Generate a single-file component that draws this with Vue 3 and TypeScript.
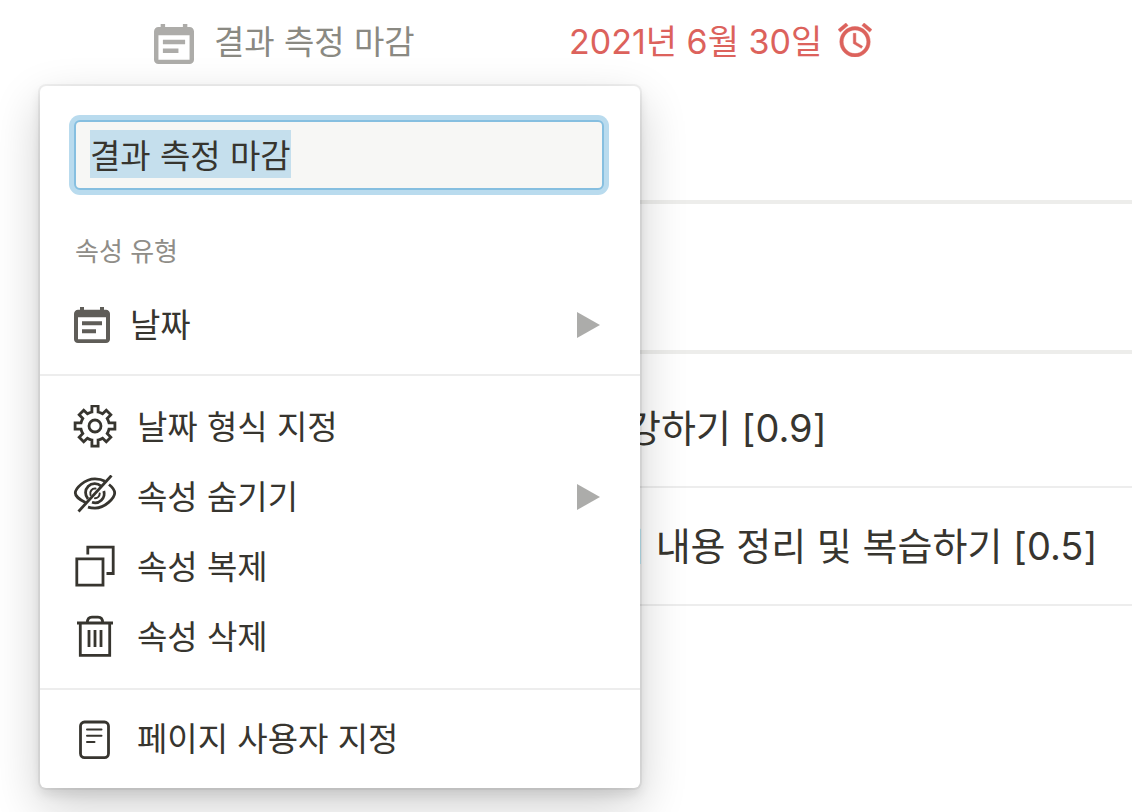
<script setup lang="ts">
import { onMounted, ref } from 'vue'

type IconName = 'gear' | 'hide' | 'duplicate' | 'trash'

interface Action {
  icon: IconName
  label: string
  submenu: boolean
}

const propertyName = ref('결과 측정 마감')
const nameInput = ref<HTMLInputElement | null>(null)

const actions: Action[] = [
  { icon: 'gear', label: '날짜 형식 지정', submenu: false },
  { icon: 'hide', label: '속성 숨기기', submenu: true },
  { icon: 'duplicate', label: '속성 복제', submenu: false },
  { icon: 'trash', label: '속성 삭제', submenu: false },
]

const calendarPath =
  'M10.8889,5.5 L3.11111,5.5 L3.11111,7.05556 L10.8889,7.05556 L10.8889,5.5 Z M12.4444,1.05556 L11.6667,1.05556 L11.6667,0 L10.1111,0 L10.1111,1.05556 L3.88889,1.05556 L3.88889,0 L2.33333,0 L2.33333,1.05556 L1.55556,1.05556 C0.692222,1.05556 0.00777777,1.75556 0.00777777,2.61111 L0,12.5 C0,13.3556 0.692222,14 1.55556,14 L12.4444,14 C13.3,14 14,13.3556 14,12.5 L14,2.61111 C14,1.75556 13.3,1.05556 12.4444,1.05556 Z M12.4444,12.5 L1.55556,12.5 L1.55556,3.94444 L12.4444,3.94444 L12.4444,12.5 Z M8.55556,8.61111 L3.11111,8.61111 L3.11111,10.1667 L8.55556,10.1667 L8.55556,8.61111 Z'

onMounted(() => {
  nameInput.value?.focus()
  nameInput.value?.select()
})
</script>

<template>
  <main class="page">
    <section class="property">
      <button class="property-name" type="button">
        <svg class="icon-calendar-lg" viewBox="0 0 14 14" aria-hidden="true"><path :d="calendarPath" /></svg>
        <span>결과 측정 마감</span>
      </button>
      <button class="property-date" type="button">
        <span>2021년 6월 30일</span>
        <svg class="icon-alarm" viewBox="2 1.86 20 20.14" aria-hidden="true">
          <path d="M22 5.72l-4.6-3.86-1.29 1.53 4.6 3.86L22 5.72zM7.88 3.39L6.6 1.86 2 5.71l1.29 1.53 4.59-3.85zM12.5 8H11v6l4.75 2.85.75-1.23-4-2.37V8zM12 4c-4.97 0-9 4.03-9 9s4.02 9 9 9c4.97 0 9-4.03 9-9s-4.03-9-9-9zm0 16c-3.87 0-7-3.13-7-7s3.13-7 7-7 7 3.13 7 7-3.13 7-7 7z" />
        </svg>
      </button>
    </section>

    <div class="table">
      <div class="band"></div>
      <div class="entry first">강하기 [0.9]</div>
      <div class="entry second">의 내용 정리 및 복습하기 [0.5]</div>
    </div>

    <div class="menu">
      <section class="group type-group">
        <input ref="nameInput" v-model="propertyName" class="name-input" type="text" aria-label="속성 이름" />
        <h2 class="caption">속성 유형</h2>
        <button class="item type-item" type="button">
          <svg class="icon-calendar" viewBox="0 0 14 14" aria-hidden="true"><path :d="calendarPath" /></svg>
          <span class="label">날짜</span>
          <svg class="arrow" viewBox="0 0 23 26" aria-hidden="true"><path d="M0 0L23 13L0 26Z" /></svg>
        </button>
      </section>

      <section class="group action-group">
        <button v-for="action in actions" :key="action.label" class="item" type="button">
          <svg class="icon" viewBox="0 0 44 44" aria-hidden="true">
            <g v-if="action.icon === 'gear'" transform="translate(22 21)">
              <path d="M-3.1-14V-20.2H3.1V-14Q5.5-13.5 7.6-12.2L11.3-15.8L15.8-11.3L12.2-7.6Q13.5-5.5 14-3.1H19.9V3.1H14Q13.5 5.5 12.2 7.6L15.8 11.3L11.3 15.8L7.6 12.2Q5.5 13.5 3.1 14V20.2H-3.1V14Q-5.5 13.5-7.6 12.2L-11.3 15.8L-15.8 11.3L-12.2 7.6Q-13.5 5.5-14 3.1H-19.9V-3.1H-14Q-13.5-5.5-12.2-7.6L-15.8-11.3L-11.3-15.8L-7.6-12.2Q-5.5-13.5-3.1-14Z" />
              <circle r="6" />
            </g>
            <g v-else-if="action.icon === 'hide'" transform="translate(0 -2)">
              <path d="M5.5 38.5L38.5 2.5" />
              <path d="M12.5 29.5C6 26.5 2.3 22.5 2.3 20C2.3 15.5 11.5 5.8 22 5.8Q28 5.8 32 8.2" />
              <path d="M36 11.5C39.8 14.5 41.7 18 41.7 20C41.7 24.8 32 35.2 22 35.2Q18 35.2 15 34.2" />
              <path d="M15 26A9.2 9.2 0 0 1 28 13" />
              <path d="M30.8 18A9.2 9.2 0 0 1 19 29.3" />
              <path class="fine" d="M17.5 22A4.8 4.8 0 0 1 22.5 15.6" />
              <path class="fine" d="M26.7 20.5A4.8 4.8 0 0 1 22 25.2" />
            </g>
            <g v-else-if="action.icon === 'duplicate'">
              <path d="M3.8 13.8H30V40.2H3.8Z" />
              <path d="M14.8 9.5V2.2H40.2V28.5H33.5" />
            </g>
            <g v-else>
              <path d="M4 8H40" />
              <path d="M14.3 8C14.3 4 16.3 2.2 19 2.2H25C27.7 2.2 29.7 4 29.7 8" />
              <path d="M7.3 8V40.3H36.7V8" />
              <path d="M16 15V32M22 15V32M28 15V32" />
            </g>
          </svg>
          <span class="label">{{ action.label }}</span>
          <svg v-if="action.submenu" class="arrow" viewBox="0 0 23 26" aria-hidden="true"><path d="M0 0L23 13L0 26Z" /></svg>
        </button>
      </section>

      <section class="group page-group">
        <button class="item" type="button">
          <svg class="icon" viewBox="0 0 44 44" aria-hidden="true">
            <rect x="7.5" y="5" width="28" height="35.6" rx="4" />
            <path class="fine" d="M14 12.5H28.5M14 18.7H28.5M14 25H21.5" />
          </svg>
          <span class="label">페이지 사용자 지정</span>
        </button>
      </section>
    </div>
  </main>
</template>

<style>
body {
  margin: 0;
  background: #fff;
}
</style>

<style scoped>
.page {
  position: relative;
  min-height: 100vh;
  overflow: hidden;
  box-sizing: border-box;
  color: #37352f;
  font-family: Inter, "Noto Sans CJK KR", sans-serif;
  font-size: 33px;
  font-weight: 400;
  line-height: 50px;
}

button {
  display: flex;
  align-items: center;
  margin: 0;
  padding: 0;
  border: 0;
  background: none;
  color: inherit;
  font: inherit;
  text-align: left;
  white-space: nowrap;
  cursor: pointer;
}

svg {
  flex: none;
  fill: currentColor;
}

.property {
  display: flex;
  align-items: center;
  padding: 17px 0 0 154px;
}

.property-name {
  width: 415px;
  gap: 20px;
  color: #8a8982;
}

.icon-calendar-lg {
  width: 40px;
  height: 40px;
  margin-top: 4px;
  color: #adaca9;
}

.property-date {
  gap: 16px;
  color: #dc625c;
  font-size: 34px;
}

.icon-alarm {
  width: 34px;
  height: 34px;
  margin-bottom: 4px;
  stroke: currentColor;
  stroke-width: 0.3;
}

.table {
  margin: 133px 0 0 80px;
  border-top: 4px solid #ededeb;
  border-bottom: 2px solid #ededed;
  font-size: 38px;
  line-height: 48px;
}

.band {
  height: 146px;
  border-bottom: 4px solid #ededeb;
}

.entry {
  padding: 34px 0 34px 530px;
  white-space: nowrap;
}

.entry.first {
  padding: 50px 0 34px 546px;
  border-bottom: 2px solid #ededed;
}

.menu {
  position: absolute;
  top: 86px;
  left: 40px;
  width: 600px;
  border-radius: 6px;
  background: #fff;
  box-shadow:
    0 0 0 2px rgba(15, 15, 15, 0.05),
    0 6px 12px rgba(15, 15, 15, 0.1),
    0 18px 48px rgba(15, 15, 15, 0.2);
}

.group + .group {
  border-top: 2px solid #ededed;
}

.type-group {
  padding: 34px 0 14px;
}

.name-input {
  display: block;
  box-sizing: border-box;
  width: calc(100% - 70px);
  height: 70px;
  margin: 0 36px 0 34px;
  padding: 0 14px 2px;
  border: 2px solid #86bfe0;
  border-radius: 6px;
  outline: 0;
  background: #f7f7f5;
  box-shadow: 0 0 0 5px #b9dbee;
  color: inherit;
  font: inherit;
}

.name-input::selection {
  background: #c5dfed;
  color: #37352f;
}

.caption {
  margin: 42px 35px 18px;
  color: #8f8d88;
  font-size: 26px;
  font-weight: 400;
  line-height: 40px;
}

.action-group {
  padding: 16px 0;
}

.page-group {
  padding: 14px 0;
}

.item {
  width: 100%;
  height: 70px;
  gap: 20px;
  padding: 0 40px 0 33px;
}

.type-item {
  padding-left: 34px;
}

.icon {
  width: 44px;
  height: 44px;
  fill: none;
  stroke: #37352f;
  stroke-width: 2.8;
}

.icon .fine {
  stroke-width: 2;
  stroke-linecap: round;
}

.icon-calendar {
  width: 36px;
  height: 36px;
  color: #5f5d58;
}

.label {
  flex: 1;
}

.arrow {
  width: 23px;
  height: 26px;
  color: #acacaa;
}
</style>
